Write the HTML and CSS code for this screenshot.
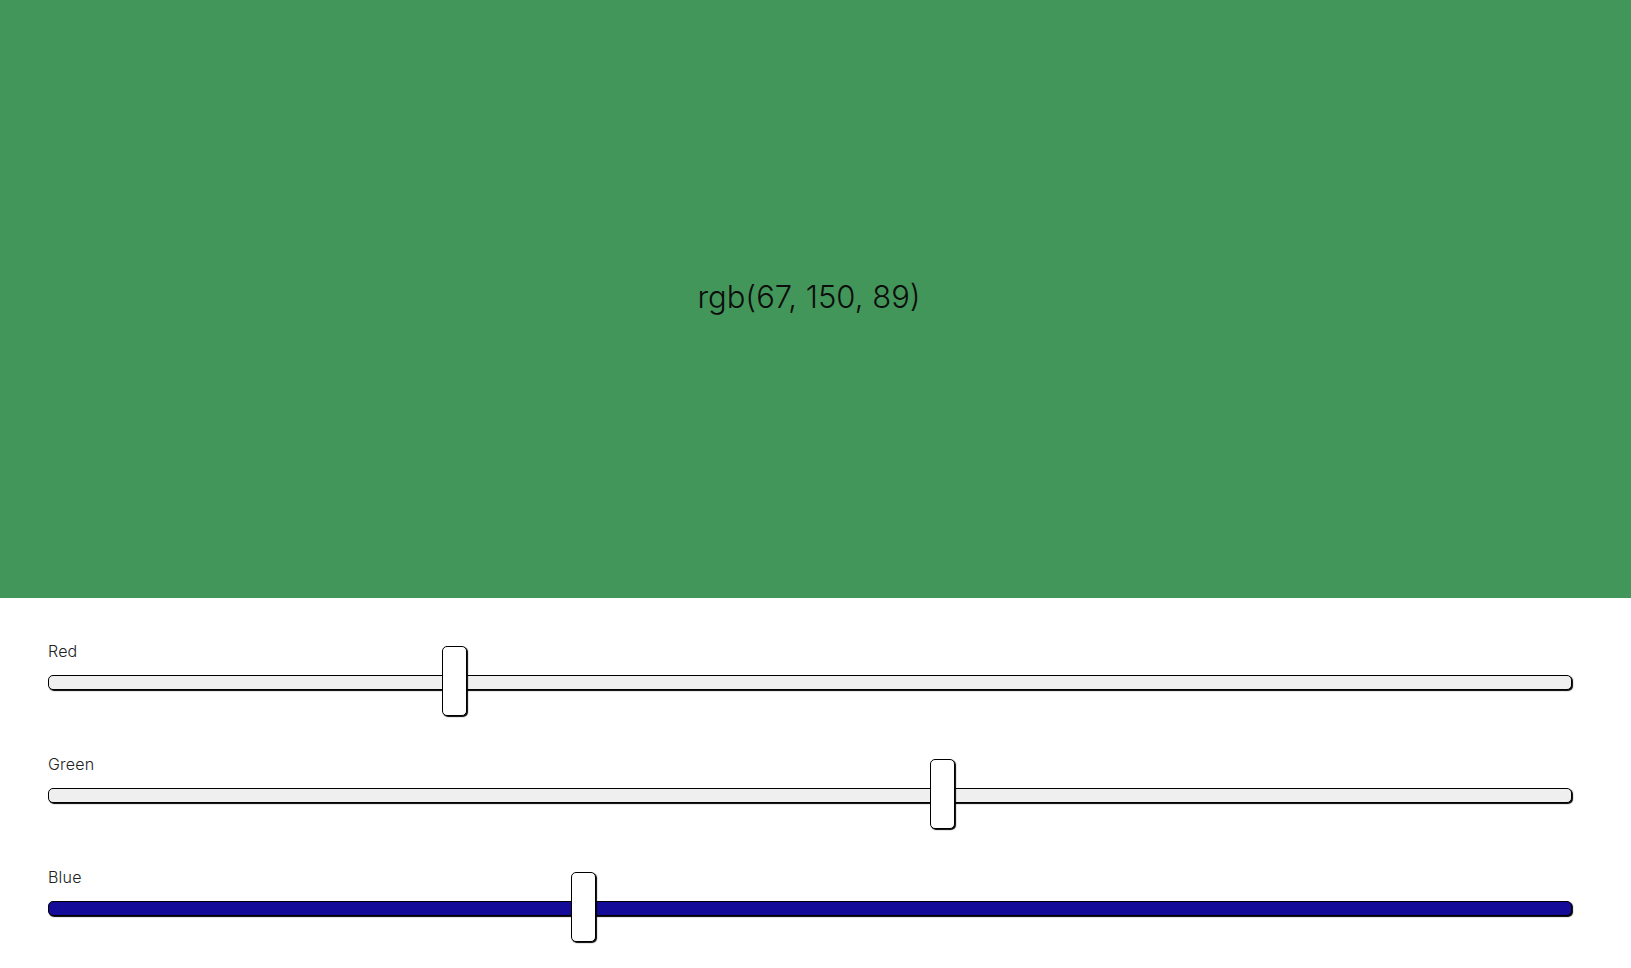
FILE: index.html
```html
<!DOCTYPE html>
<html lang="en">
<head>
<meta charset="utf-8">
<title>RGB Color Picker</title>
<link rel="stylesheet" href="styles.css">
</head>
<body>
<main class="app">
  <section class="preview">
    <h1 class="preview-value">rgb(67, 150, 89)</h1>
  </section>
  <section class="controls">
    <div class="slider-row">
      <label class="slider-label">Red</label>
      <div class="track">
        <div class="thumb" style="left: calc((100% - 23px) * 0.26275 - 1px)"></div>
      </div>
    </div>
    <div class="slider-row">
      <label class="slider-label">Green</label>
      <div class="track">
        <div class="thumb" style="left: calc((100% - 23px) * 0.58824 - 1px)"></div>
      </div>
    </div>
    <div class="slider-row">
      <label class="slider-label">Blue</label>
      <div class="track track-active">
        <div class="thumb" style="left: calc((100% - 23px) * 0.34902 - 1px)"></div>
      </div>
    </div>
  </section>
</main>
</body>
</html>
```

FILE: styles.css
```css
html {
  overflow: hidden;
}

html, body {
  margin: 0;
  padding: 0;
  background: #ffffff;
}

body {
  font-family: Inter, "Open Sans", "Liberation Sans", sans-serif;
  color: #111111;
}

.app {
  display: flex;
  flex-direction: column;
  padding-bottom: 60px;
}

.preview {
  height: 598px;
  box-sizing: border-box;
  padding: 0 13px 4px 0;
  background: rgb(67, 150, 89);
  display: flex;
  align-items: center;
  justify-content: center;
}

.preview-value {
  margin: 0;
  font-size: 31px;
  font-weight: 300;
  line-height: 40px;
  color: #0d0d0d;
}

.controls {
  display: flex;
  flex-direction: column;
  gap: 62px;
  padding: 41px 59px 0 48px;
}

.slider-row {
  display: flex;
  flex-direction: column;
  gap: 12px;
}

.slider-label {
  font-size: 16px;
  font-weight: 300;
  line-height: 24px;
  letter-spacing: 0.2px;
  color: #222222;
}

.track {
  position: relative;
  height: 13px;
  border: 1px solid #000000;
  border-radius: 5px;
  background: #efefef;
  box-shadow: 1px 1px 1px #000000;
}

.track-active {
  background: #140b98;
}

.thumb {
  position: absolute;
  top: -30px;
  width: 23px;
  height: 68px;
  border: 1px solid #000000;
  border-radius: 5px;
  background: #ffffff;
  box-shadow: 1px 1px 1px #000000;
}
```
